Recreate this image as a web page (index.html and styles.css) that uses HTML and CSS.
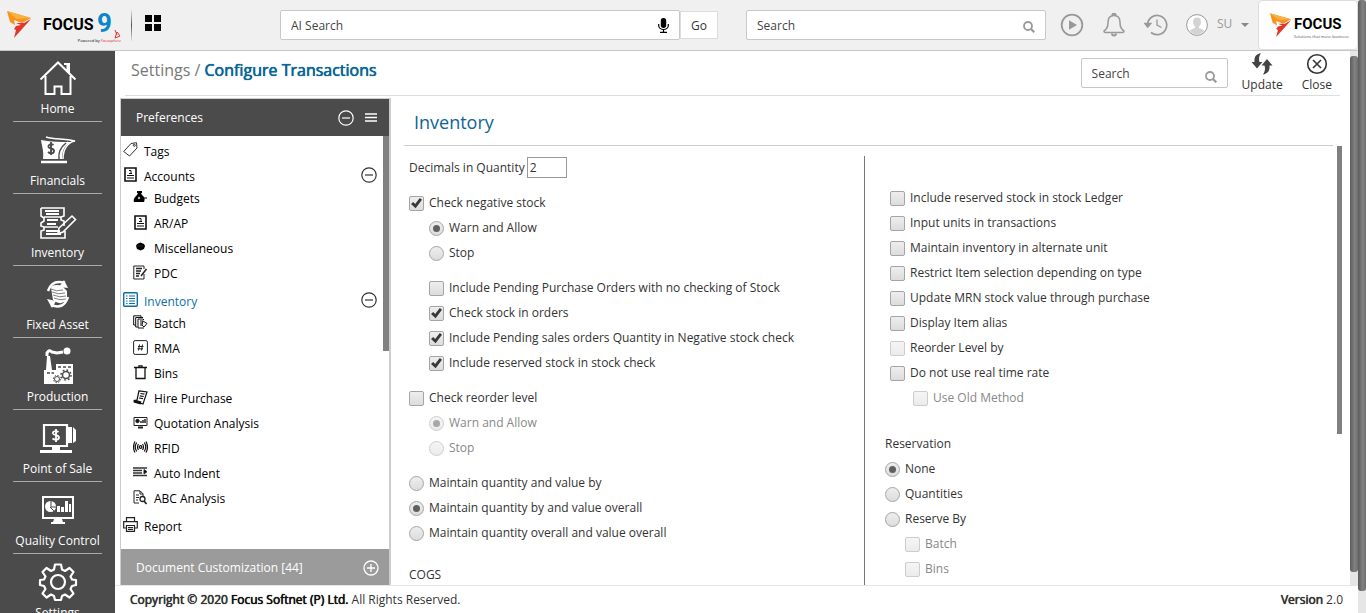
FILE: index.html
```html
<!DOCTYPE html>
<html lang="en">
<head>
<meta charset="utf-8">
<title>Configure Transactions</title>
<link rel="stylesheet" href="styles.css">
</head>
<body>
<svg class="defs" aria-hidden="true">
  <symbol id="bird" viewBox="0 0 25 28"><path fill="#f7941e" d="M0 0 24 7 15 12 7 9 8 14 3 11Z"/><path fill="#fbb040" d="M0 0 24 7 10 8Z"/><path fill="#e5352b" d="M24 8 7 27 9 19 7 18 9 15 14 14 9 12 17 12Z"/></symbol>
  <symbol id="lens" viewBox="0 0 12 12"><circle cx="5" cy="5" r="4" fill="none" stroke="#9a9a9a" stroke-width="1.8"/><path d="m8 8 3.3 3.3" stroke="#9a9a9a" stroke-width="2.2"/></symbol>
  <symbol id="minus" viewBox="0 0 16 16"><circle cx="8" cy="8" r="7.2" fill="none" stroke="currentColor" stroke-width="1.2"/><path d="M4 8h8" stroke="currentColor" stroke-width="1.2"/></symbol>
  <symbol id="ledger" viewBox="0 0 15 15"><path d="M2 1h11v13H2z" fill="none" stroke="#111" stroke-width="1.6"/><path d="M4 8.5h7M4 11h7" stroke="#111" stroke-width="1.2"/><path d="M6 3.5h2v3M6 6.5h3" fill="none" stroke="#111"/></symbol>
</svg>
<div class="window">
  <div class="app">
    <header class="topbar">
      <div class="topbar-left">
        <a class="brand" href="#"><svg class="bird"><use href="#bird"/></svg><span class="brand-name">FOCUS</span><span class="brand-nine">9</span><svg class="cursor" viewBox="0 0 8 9"><path d="m1 0 2 5M3 2l3 4-5 2z" stroke="#d33" fill="none"/></svg><small class="brand-note">Powered by <i>Focusphere</i></small></a>
        <span class="bar-line"></span>
        <button class="plain" aria-label="Apps"><svg width="16" height="16" viewBox="0 0 16 16"><path d="M0 0h7v7H0zM9 0h7v7H9zM0 9h7v7H0zM9 9h7v7H9z"/></svg></button>
      </div>
      <div class="searches">
        <div class="ai">
          <label class="field"><input type="text" placeholder="AI Search" aria-label="AI Search"><svg width="11" height="15" viewBox="0 0 11 15"><rect x="2.8" y="0" width="5.4" height="10" rx="2.7"/><path d="M.7 6v1.5a4.8 4 0 0 0 9.6 0V6M5.5 11.500v2.500M2 14.300h7" fill="none" stroke="#000" stroke-width="1.200"/></svg></label><button class="go">Go</button>
        </div>
        <label class="field"><input type="text" placeholder="Search" aria-label="Search"><svg class="lens"><use href="#lens"/></svg></label>
      </div>
      <div class="tools">
        <button class="plain" aria-label="Play"><svg width="24" height="24" viewBox="0 0 24 24"><circle cx="12" cy="12" r="10.300" fill="none" stroke="#999" stroke-width="1.800"/><path d="m9 7.200 8 4.800-8 4.800z" fill="#999"/></svg></button>
        <button class="plain" aria-label="Notifications"><svg width="24" height="24" viewBox="0 0 24 24" fill="none" stroke="#999" stroke-width="1.500"><path d="M12 2.500c-4 0-6 3-6 7 0 5-1.500 7-4 8.500 0 1 .5 1.500 1.500 1.500h17c1 0 1.500-.5 1.500-1.500-2.500-1.500-4-3.500-4-8.500 0-4-2-7-6-7Z"/><path d="M10.500 2a1.500 1.500 0 0 1 3 0M10 20.500a2 2 0 0 0 4 0" stroke-width="2"/></svg></button>
        <button class="plain" aria-label="History"><svg width="24" height="24" viewBox="0 0 24 24" fill="none" stroke="#999" stroke-width="1.700"><path d="M3.500 12A9.600 9.600 0 1 1 7 19.500"/><path d="m1 10.500 2.700 3.300 2.800-3.300z" fill="#999"/><path d="M13 6.500V12l4.500 2.500" stroke-width="1.300"/></svg></button>
        <button class="plain user"><svg width="22" height="22" viewBox="0 0 22 22"><circle cx="11" cy="11" r="10.400" fill="#fff" stroke="#999"/><path d="M11 3.500c-3 0-4 2-4 4.500 0 2 1 3.500 2 4.500v1.500c-2 .8-4 1.300-5.200 2.800 3.700 5 10.700 5 14.400 0C17 15.300 15 14.800 13 14v-1.500c1-1 2-2.500 2-4.500 0-2.500-1-4.500-4-4.500Z" fill="#d3d3d3"/></svg><span>SU</span><i class="caret"></i></button>
      </div>
      <div class="client"><svg class="bird"><use href="#bird"/></svg><div class="client-text"><span class="client-name">FOCUS</span><small>Solutions that move business</small></div></div>
    </header>

    <div class="body">
      <nav class="rail">
        <a href="#"><svg viewBox="0 0 40 40" fill="none" stroke="#fff" stroke-width="2"><path d="m2.500 21.500 17.500-17 17.500 17M29.500 6v7.500M26 6h5v9M7.500 18v18h9v-7.500h7V36h9V18"/></svg>Home</a>
        <a href="#"><svg viewBox="0 0 40 40"><path d="M3 10c1 7 3 11 2 19h19c0-9 3-14 9-17-9 0-19 0-30-2Z" fill="#fff"/><path d="M8 7c10 3 17 1 29 4-7 1-12 8-12 18M21 29c0-8 3-13 9-17" fill="none" stroke="#fff" stroke-width="1.500"/><path d="M21 29c-1-7 2-12 7-16" fill="none" stroke="#4b4b4b" stroke-width="1.500"/><path d="M3 32h26" stroke="#fff" stroke-width="2.500"/><path d="M15.500 15c-3-2-5.500 0-5 2 .8 2 5.500 1 5.500 4s-4 3-6 1M13 12v13" fill="none" stroke="#4b4b4b" stroke-width="1.900"/></svg>Financials</a>
        <a href="#"><svg viewBox="0 0 40 40" fill="none" stroke="#fff" stroke-width="1.600"><path d="M3 6h23v8l-3 1v3l3 1v5M3 6v8l3 2v3l-3 2v3l3 1v3l-3 1v7h24v-7M6 15h17M5 25h15"/><path d="M7 9h14M8 12h13M9 18h11M9 22h9M8 29h14M8 32h15" stroke-width="2"/><path d="m21 26 13-12 3.500 3.500L25 30l-5 1.500z"/></svg>Inventory</a>
        <a href="#"><svg viewBox="0 0 40 40"><path d="M13 14q0-3 6-3t7 3l3 3v9q-5 5-11 2l-3-2z" fill="#fff"/><path d="M13 15q5 3 12 1M14 18q6 3 13 1M15 21q7 3 13 1M16 24q6 3 12 1" fill="none" stroke="#4b4b4b" stroke-width=".7"/><path d="M10 17Q14 5 27 9M30 23Q26 36 13 31" fill="none" stroke="#fff" stroke-width="2.500"/><path d="m26 6 4 8-9-1zM14 34l-5-9 9 2z" fill="#fff"/></svg>Fixed Asset</a>
        <a href="#"><svg viewBox="0 0 40 40"><path d="M6 38V24h2L9 10h3l2 14h4v-6h17v20z" fill="#fff"/><path d="M9 10V7q2-4 5-1l5 1 6-1" fill="none" stroke="#fff" stroke-width="3"/><circle cx="29" cy="5" r="3.500" fill="#fff"/><path d="M9 27h7M20 21h3M25 21h3M30 21h3" stroke="#4b4b4b" stroke-width="1.500" stroke-dasharray="3 1.500"/><g fill="none" stroke="#4b4b4b"><circle cx="28" cy="29" r="3.500" stroke-width="1.500"/><circle cx="28" cy="29" r="5" stroke-width="1.500" stroke-dasharray="1.800 2.100"/><circle cx="19" cy="33" r="2.500"/><circle cx="19" cy="33" r="3.600" stroke-dasharray="1.500 1.300"/></g></svg>Production</a>
        <a href="#"><svg viewBox="0 0 40 40"><path d="M6 7h23v21H6z" fill="none" stroke="#fff" stroke-width="2.200"/><path d="M30 9h5l3 3v11l-3 2h-5zM14 28h8v4h12v3H2v-3h12z" fill="#fff"/><path d="M34.500 9v16" stroke="#4b4b4b"/><path d="M20.500 14c-3-2-6-.5-5.500 1.500.8 2 6 1.500 6 4s-4 3-6.500 1M18 11v13" fill="none" stroke="#fff" stroke-width="1.800"/></svg>Point of Sale</a>
        <a href="#"><svg viewBox="0 0 40 40"><path d="M5 7h30v21H5z" fill="none" stroke="#fff" stroke-width="2"/><path d="M4 27h32v2H4zM16 29h8l1 3h2v2H13v-2h2zM19 22v-6h3v6zM23 22v-5h3v5zM27 22V11h3v11zM31 22v-8h2v8z" fill="#fff"/><circle cx="12.500" cy="16.500" r="5.500" fill="#fff"/><path d="M13 11v6h5M12 17l4 4" stroke="#4b4b4b" fill="none"/></svg>Quality Control</a>
        <a href="#"><svg viewBox="0 0 40 40" fill="none" stroke="#fff" stroke-width="2.200"><circle cx="20" cy="20" r="7"/><path d="M17 2.500h6l1 5 3 1.500 4.500-3 4 4-3 4.500 1.500 3 4 .5v5l-4 1-1.500 3 3 4.500-4 4-4.500-3-3 1.500-1 4h-6l-1-4-3-1.500-4.500 3-4-4 3-4.500-1.500-3-4-1v-5l4-.5 1.500-3-3-4.500 4-4 4.500 3 3-1.500z" stroke-linejoin="round"/></svg>Settings</a>
      </nav>

      <div class="work">
        <div class="work-row">
          <main class="page">
            <div class="page-bar">
              <h1>Settings / <b>Configure Transactions</b></h1>
              <label class="field local"><input type="text" placeholder="Search" aria-label="Search settings"><svg class="lens"><use href="#lens"/></svg></label>
              <button class="action update"><svg width="22" height="22" viewBox="0 0 22 22" fill="#444"><path d="M10 0C5 1 3 4 3.500 9H.5L6 15.500 11.500 9H8.500C7.500 6 8 3 10 0ZM12 21.500c5-1 7-4 6.500-9h3L16 6l-5.500 6.500h3c1 3 .5 6-1.500 9Z"/></svg>Update</button>
              <button class="action close"><svg width="22" height="22" viewBox="0 0 22 22" fill="none" stroke="#333" stroke-width="1.600"><circle cx="11" cy="11" r="9.300"/><path d="m7 7 8 8M15 7l-8 8"/></svg>Close</button>
            </div>
            <div class="panes">
              <aside class="panel">
                <div class="panel-head"><span>Preferences</span><button class="plain" aria-label="Collapse all"><svg class="i16"><use href="#minus"/></svg></button><button class="plain" aria-label="Menu"><svg width="12" height="9" viewBox="0 0 12 9"><path d="M0 1h12M0 4.500h12M0 8h12" stroke="#fff" stroke-width="1.500"/></svg></button></div>
                <div class="tree">
                  <ul>
                    <li><a class="top" href="#"><svg viewBox="0 0 15 15" fill="none" stroke="#333"><path d="M.7 9.500 8 1.500 13.500.7 14 6l-7.500 8z"/><circle cx="11.300" cy="3.300" r="1"/></svg>Tags</a></li>
                    <li><a class="top" href="#"><svg><use href="#ledger"/></svg>Accounts<svg class="i16 fold"><use href="#minus"/></svg></a>
                      <ul class="sub">
                        <li><a href="#"><svg viewBox="0 0 15 15"><path d="M4 1h5v2H4zM5 3h3l1 2c3 2 3 5 2 7H1C0 9 2 7 4 5z"/><path d="M11 8h3" stroke="#000"/><circle cx="6" cy="8" r="1.200" fill="#bbb"/></svg>Budgets</a></li>
                        <li><a href="#"><svg><use href="#ledger"/></svg>AR/AP</a></li>
                        <li><a href="#"><svg viewBox="0 0 15 15"><path d="m4 4 3.500-1.500L11 4l1 2-1 3-3.500 1.500L4 9 3 6z"/><path d="M4.500 6h6" stroke="#555" stroke-dasharray="1 1"/></svg>Miscellaneous</a></li>
                        <li><a href="#"><svg viewBox="0 0 15 15" fill="none" stroke="#222"><path d="M11 9v5H.8V1H11v3"/><path d="M3 3.500h6M3 6h5M3 8.500h4M3 11h3M8 11l5.500-7" stroke-width="1.500"/></svg>PDC</a></li>
                      </ul></li>
                    <li><a class="top current" href="#"><svg viewBox="0 0 15 15" fill="none" stroke="#0e6fa8"><rect x=".7" y=".7" width="13.600" height="13.600" rx="1" stroke-width="1.400"/><path d="M3 4h1.500M6 4h6M3 6.500h1.500M6 6.500h6M3 9h1.500M6 9h6M3 11.500h1.500M6 11.500h6" stroke-width="1.200"/></svg>Inventory<svg class="i16 fold"><use href="#minus"/></svg></a>
                      <ul class="sub">
                        <li><a href="#"><svg viewBox="0 0 15 15" fill="none" stroke="#111"><path d="M2.500 10H.7V.8H8V2M4.500 12H2.700V2.500H10"/><path d="M5 4h5l1 1M5 4v9h6M7 6h3M7 8h2M7 10h2M10 6l4 2.500-3 3.500-2-2z"/></svg>Batch</a></li>
                        <li><a href="#"><svg viewBox="0 0 15 15" fill="none" stroke="#222"><rect x=".6" y=".6" width="13.800" height="13.800" rx="1.500"/><path d="M6.500 4.500 5.500 10.500M9.500 4.500l-1 6M5 6.500h5.500M4.500 8.800H10"/></svg>RMA</a></li>
                        <li><a href="#"><svg viewBox="0 0 15 15" fill="none" stroke="#111"><path d="M1 2.500h13" stroke-width="1.500"/><path d="M6 2V.8h3V2M3 3v10.500h9V3" stroke-width="1.300"/></svg>Bins</a></li>
                        <li><a href="#"><svg viewBox="0 0 15 15" fill="none" stroke="#111" stroke-width="1.200"><path d="m6 .8 8 1.200-4 12-9-3 3-1zM7.500 3.500l4 .7M6.800 5.800l4 .7M6 8l4 .7"/><path d="m1 11 7 2" stroke-width="3"/></svg>Hire Purchase</a></li>
                        <li><a href="#"><svg viewBox="0 0 15 15" fill="none" stroke="#222"><path d="M1 2.500h13v8H1z" stroke-width="1"/><circle cx="4.500" cy="6" r="1.700" fill="#111"/><path d="M8 8V6M10 8V5M12 8V4" stroke-width="1.500"/><path d="M5 12.500h5" stroke-width="2"/></svg>Quotation Analysis</a></li>
                        <li><a href="#"><svg viewBox="0 0 15 15" fill="none" stroke="#111" stroke-width="1.200"><circle cx="7.500" cy="7" r="1.300"/><path d="M5.500 4Q3.500 7 5.500 10M9.500 4q2 3 0 6M3.700 2.500Q.8 7 3.700 11.500M11.300 2.500q2.900 4.500 0 9M2 1.500Q-1 7 2 12.500M13 1.500q3 5.500 0 11"/></svg>RFID</a></li>
                        <li><a href="#"><svg viewBox="0 0 15 15" fill="none" stroke="#333"><path d="M0 3h14M0 5.500h9M0 8h9M0 10.500h14" stroke-width="1.400"/><path d="m11 4.500 3 2.200-3 2.300z" fill="#000"/></svg>Auto Indent</a></li>
                        <li><a href="#"><svg viewBox="0 0 15 15" fill="none" stroke="#222"><path d="M6 13H1V.8h6l3 3V6M7 1v3h3M3 5h3M3 7.500h3M3 10h2"/><circle cx="9.500" cy="9" r="2.500" stroke-width="1.300"/><path d="m11 11 2.500 3" stroke-width="1.700"/></svg>ABC Analysis</a></li>
                      </ul></li>
                    <li><a class="top" href="#"><svg viewBox="0 0 15 15" fill="none" stroke="#222" stroke-width="1.200"><path d="M3.500 4.500V.7h8v3.800M3.500 11H.7V4.700h13.600V11h-2.800M3.500 8.500h8v5.800h-8zM5 10.500h5M5 12.300h5"/></svg>Report</a></li>
                  </ul>
                  <span class="thumb tree-thumb"></span>
                </div>
                <div class="panel-foot"><span>Document Customization [44]</span><button class="plain" aria-label="Expand"><svg width="16" height="16" viewBox="0 0 16 16" fill="none" stroke="#fff" stroke-width="1.300"><circle cx="8" cy="8" r="7"/><path d="M4 8h8M8 4v8"/></svg></button></div>
              </aside>

              <section class="content">
                <h2>Inventory</h2>
                <div class="content-body">
                  <form class="columns">
                    <div class="col">
                      <label class="decimals">Decimals in Quantity <input type="text" value="2"></label>
                      <label class="opt"><input type="checkbox" checked>Check negative stock</label>
                      <label class="opt in"><input type="radio" name="neg" checked>Warn and Allow</label>
                      <label class="opt in"><input type="radio" name="neg">Stop</label>
                      <label class="opt in gap"><input type="checkbox">Include Pending Purchase Orders with no checking of Stock</label>
                      <label class="opt in"><input type="checkbox" checked>Check stock in orders</label>
                      <label class="opt in"><input type="checkbox" checked>Include Pending sales orders Quantity in Negative stock check</label>
                      <label class="opt in"><input type="checkbox" checked>Include reserved stock in stock check</label>
                      <label class="opt gap"><input type="checkbox">Check reorder level</label>
                      <label class="opt in off"><input type="radio" name="reorder" checked disabled>Warn and Allow</label>
                      <label class="opt in off"><input type="radio" name="reorder" disabled>Stop</label>
                      <label class="opt gap"><input type="radio" name="maintain">Maintain quantity and value by</label>
                      <label class="opt"><input type="radio" name="maintain" checked>Maintain quantity by and value overall</label>
                      <label class="opt"><input type="radio" name="maintain">Maintain quantity overall and value overall</label>
                      <h3 class="cogs">COGS</h3>
                    </div>
                    <div class="col second">
                      <div class="stack">
                        <label class="opt"><input type="checkbox">Include reserved stock in stock Ledger</label>
                        <label class="opt"><input type="checkbox">Input units in transactions</label>
                        <label class="opt"><input type="checkbox">Maintain inventory in alternate unit</label>
                        <label class="opt"><input type="checkbox">Restrict Item selection depending on type</label>
                        <label class="opt"><input type="checkbox">Update MRN stock value through purchase</label>
                        <label class="opt"><input type="checkbox">Display Item alias</label>
                        <label class="opt"><input type="checkbox" disabled>Reorder Level by</label>
                        <label class="opt"><input type="checkbox">Do not use real time rate</label>
                        <label class="opt old off"><input type="checkbox" disabled>Use Old Method</label>
                      </div>
                      <h3>Reservation</h3>
                      <label class="opt"><input type="radio" name="res" checked>None</label>
                      <label class="opt"><input type="radio" name="res">Quantities</label>
                      <label class="opt"><input type="radio" name="res">Reserve By</label>
                      <label class="opt in off"><input type="checkbox" disabled>Batch</label>
                      <label class="opt in off"><input type="checkbox" disabled>Bins</label>
                    </div>
                  </form>
                  <span class="thumb content-thumb"></span>
                </div>
              </section>
            </div>
          </main>
          <div class="track"><span class="slider"></span></div>
        </div>
        <footer class="footer"><span><b>Copyright © 2020 <span class="company">Focus Softnet (P) Ltd.</span></b> All Rights Reserved.</span><span><b>Version</b> 2.0</span></footer>
      </div>
    </div>
  </div>
  <div class="track outer"><span class="slider"></span></div>
</div>
</body>
</html>
```

FILE: styles.css
```css
* { box-sizing: border-box; }
body {
  margin: 0;
  font: 12px/16px "Open Sans", sans-serif;
  color: #333;
  background: #fff;
}
.defs { display: none; }
a { color: inherit; text-decoration: none; }
ul { list-style: none; margin: 0; padding: 0; }
svg { display: block; flex: none; }
button, input { font: inherit; color: inherit; }
.plain { border: 0; padding: 0; background: none; display: flex; align-items: center; }
.i16 { width: 16px; height: 16px; }

.window { display: flex; height: 100vh; overflow: hidden; }
.app { flex: 1; min-width: 0; display: flex; flex-direction: column; }

/* scroll tracks */
.track { flex: none; width: 8px; background: #e6e6e6; display: flex; padding: 5px 0 13px; }
.track.outer { padding: 0 0 22px; }
.slider { flex: 1; border-radius: 3px; background: linear-gradient(90deg, #5c5c5c, #828282 60%, #6e6e6e); }
.thumb { flex: none; background: #808080; }

/* top bar */
.topbar {
  flex: none;
  height: 51px;
  display: flex;
  align-items: center;
  background: #f0f0f0;
  border-bottom: 1px solid #c6c6c6;
}
.topbar-left { width: 280px; flex: none; display: flex; align-items: center; padding-left: 7px; }
.brand { position: relative; display: flex; align-items: center; width: 124px; height: 30px; color: #000; }
.bird { width: 25px; height: 28px; }
.brand-name { width: 50px; font: bold 16px/20px Roboto, sans-serif; margin-left: 11px; }
.brand-nine { font: bold 26px/26px Roboto, sans-serif; color: #0b86c8; margin: 0 0 4px 4px; }
.cursor { position: absolute; right: 9px; bottom: 1px; width: 8px; height: 9px; }
.brand-note { position: absolute; right: 10px; bottom: -3px; font-size: 4px; line-height: 4px; white-space: nowrap; }
.brand-note i { color: #e03030; }
.bar-line { width: 1px; height: 32px; margin-right: 13px; background: linear-gradient(#f0f0f0, #555 50%, #e0e0e0); }
.topbar-left .plain { margin-bottom: 4px; }
.field {
  display: flex;
  align-items: center;
  height: 30px;
  padding: 0 10px;
  background: #fff;
  border: 1px solid #c8c8c8;
  border-radius: 2px;
}
.field input { flex: 1; min-width: 0; border: 0; outline: 0; padding: 2px 0 0; background: none; }
.field input::placeholder { color: #444; opacity: 1; }
.lens { width: 12px; height: 12px; margin-top: 4px; }
.searches { flex: 1; display: grid; grid-template-columns: 438fr 300fr; gap: 28px; }
.ai { display: flex; align-items: center; }
.ai .field { flex: 1; }
.go { width: 38px; height: 28px; background: #fff; border: 1px solid #ddd; padding: 1px 0 0; }
.tools { flex: none; width: 212px; padding-left: 14px; display: flex; align-items: center; gap: 18px; }
.user { gap: 9px; color: #999; }
.user span { margin-bottom: 3px; }
.caret { border: 4px solid transparent; border-top-color: #888; border-bottom: 0; }
.client {
  flex: none;
  width: 100px;
  height: 50px;
  display: flex;
  align-items: center;
  padding-left: 11px;
  background: #fff;
  border: 1px solid #ddd;
  border-radius: 4px;
  color: #000;
}
.client .bird { width: 22px; height: 25px; }
.client-text { margin-left: 2px; padding-top: 2px; }
.client-name { display: block; font: bold 15px/20px Roboto, sans-serif; }
.client small { display: block; font-size: 4px; line-height: 5px; color: #555; white-space: nowrap; }

/* left rail */
.body { flex: 1; min-height: 0; display: flex; }
.rail { flex: none; width: 115px; padding: 0 13px; background: #4b4b4b; color: #fff; overflow: hidden; }
.rail a {
  display: flex;
  flex-direction: column;
  align-items: center;
  height: 72px;
  padding-top: 8px;
  border-bottom: 1px solid #aaa;
  white-space: nowrap;
}
.rail a:first-child { height: 71px; padding-top: 7px; }
.rail svg { width: 40px; height: 40px; margin-bottom: 3px; }

/* page */
.work { flex: 1; min-width: 0; display: flex; flex-direction: column; }
.work-row { flex: 1; min-height: 0; display: flex; }
.page { flex: 1; min-width: 0; display: flex; flex-direction: column; }
.page-bar {
  flex: none;
  height: 45px;
  margin: 0 10px;
  padding-left: 6px;
  display: flex;
  align-items: center;
  border-bottom: 1px solid #ddd;
}
.page-bar h1 { flex: 1; margin: 0 0 6px; font-size: 16px; line-height: 24px; font-weight: 400; color: #777; }
.page-bar b, .footer b { font-weight: 400; text-shadow: 0 0 1px currentColor, 0 0 0 currentColor; }
.page-bar b { color: #0e6496; }
.local { width: 147px; }
.local .lens { margin-top: 8px; }
.action { display: flex; flex-direction: column; align-items: center; border: 0; padding: 0; background: none; }
.update { margin-left: 14px; }
.close { margin: 0 8px 0 19px; }
.action svg { margin-bottom: 2px; }

.panes { flex: 1; min-height: 0; display: flex; padding: 2px 0 0 5px; }
.panel {
  flex: none;
  width: 271px;
  display: flex;
  flex-direction: column;
  border: 1px solid #ccc;
  border-right-width: 2px;
  border-bottom: 0;
}
.panel-head { flex: none; height: 37px; display: flex; align-items: center; gap: 11px; padding: 0 12px 0 15px; background: #4b4b4b; color: #fff; }
.panel-head span, .panel-foot span { flex: 1; }
.panel-foot { flex: none; height: 36px; display: flex; align-items: center; padding: 2px 10px 0 15px; background: #9b9b9b; color: #fff; }
.tree { flex: 1; min-height: 0; display: flex; color: #000; overflow: hidden; }
.tree > ul { flex: 1; }
.tree-thumb { width: 6px; height: 215px; }
.tree a { display: flex; align-items: center; gap: 6px; height: 25px; }
.tree a svg { width: 15px; height: 15px; margin-bottom: 3px; }
.tree .top { height: 20px; margin-top: 5px; padding: 2px 6px 0 2px; }
.tree .top svg { margin-bottom: 5px; }
.tree .top .fold { width: 16px; height: 16px; margin-left: auto; color: #333; }
.tree .current { color: #0e6fa8; }
.sub { padding-left: 12px; }

.content { flex: 1; min-width: 0; display: flex; flex-direction: column; padding: 0 8px 0 13px; }
.content h2 {
  flex: none;
  height: 48px;
  margin: 0 9px 0 0;
  padding: 12px 10px 0;
  font-size: 18px;
  line-height: 24px;
  font-weight: 400;
  color: #0e6496;
  border-bottom: 1px solid #ccc;
}
.content-body { flex: 1; min-height: 0; display: flex; }
.columns {
  flex: 1;
  min-width: 0;
  display: grid;
  grid-template-columns: minmax(0, 455fr) minmax(0, 469fr);
  padding: 10px 4px 0 5px;
  overflow: hidden;
}
.content-thumb { width: 5px; height: 288px; }
.second { border-left: 1px solid #777; padding: 29px 0 0 20px; }
.stack { padding-left: 5px; margin-bottom: 21px; }
.decimals { display: flex; align-items: center; gap: 2px; height: 21px; margin: 1px 0 12px; }
.decimals input { width: 40px; height: 21px; border: 1px solid #999; padding: 0 2px; }
.opt { display: flex; align-items: center; gap: 5px; height: 25px; white-space: nowrap; }
.in { margin-left: 20px; }
.old { margin-left: 23px; }
.gap { margin-top: 10px; }
.off { color: #888; }
.col h3 { margin: 0; font-size: 12px; line-height: 25px; font-weight: 400; }
.col .cogs { margin-top: 17px; }
.opt input {
  appearance: none;
  flex: none;
  width: 15px;
  height: 15px;
  margin: 1px 0 0;
  border: 1px solid #a5a5a5;
  border-radius: 2px;
  background: linear-gradient(#eee, #dcdcdc);
  display: grid;
  place-items: center;
}
.opt input[type="radio"] { border-radius: 50%; }
.opt input[type="checkbox"]:checked::before {
  content: "";
  width: 11px;
  height: 11px;
  background: #383838;
  clip-path: polygon(0 58%, 20% 40%, 38% 58%, 80% 4%, 100% 20%, 42% 98%);
}
.opt input[type="radio"]:checked::before {
  content: "";
  width: 7px;
  height: 7px;
  border-radius: 50%;
  background: #606060;
}
.opt input:disabled { opacity: .55; }

.footer {
  flex: none;
  height: 28px;
  display: flex;
  justify-content: space-between;
  align-items: center;
  padding: 0 15px;
  border-top: 1px solid #e6e6e6;
}
.company { color: #111; }
```
